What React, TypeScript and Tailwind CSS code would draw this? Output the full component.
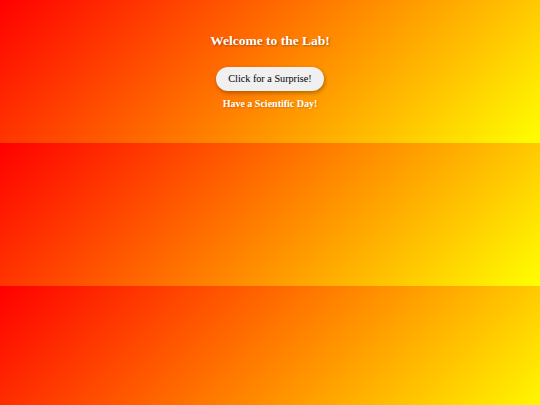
export default function App() {
  return (
    <div
      className="min-h-[405px] w-full bg-[linear-gradient(135deg,#ff0000,#ffff00)] bg-[length:100%_143px] bg-repeat-y"
      style={{ fontFamily: '"Liberation Serif", "Times New Roman", serif' }}
    >
      <div className="flex flex-col items-center pt-[32.5px] text-center">
        <h1 className="text-[13.5px] font-bold leading-[16px] text-white [text-shadow:1px_1px_2px_rgba(0,0,0,0.35)]">
          Welcome to the Lab!
        </h1>
        <button className="mt-[18.5px] rounded-full bg-[#f0f0f0] px-[12.5px] py-[6px] text-[10.2px] leading-[12px] text-black shadow-[1px_2px_4px_rgba(0,0,0,0.3)]">
          Click for a Surprise!
        </button>
        <p className="mt-[7px] text-[10px] font-bold leading-[12px] text-white [text-shadow:1px_1px_2px_rgba(0,0,0,0.2)]">
          Have a Scientific Day!
        </p>
      </div>
    </div>
  );
}
